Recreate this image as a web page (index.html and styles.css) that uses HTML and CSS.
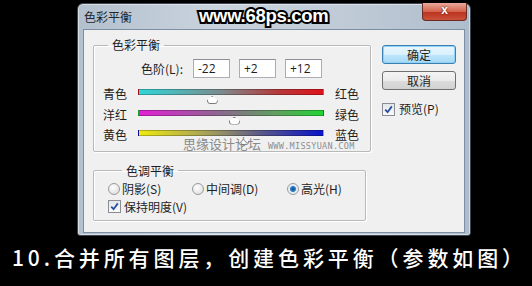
FILE: index.html
```html
<!DOCTYPE html>
<html lang="zh-CN">
<head>
  <meta charset="utf-8">
  <title>色彩平衡</title>
  <link rel="stylesheet" href="styles.css">
</head>
<body>

<div class="dialog">
  <div class="titlebar">
    <span class="title">色彩平衡</span>
    <span class="site">www.68ps.com</span>
    <span class="close">x</span>
  </div>

  <div class="client">
    <div class="main">
      <fieldset class="group balance">
        <legend>色彩平衡</legend>
        <div class="levels">
          <span class="levels-label">色阶(L):</span>
          <span class="field">-22</span>
          <span class="field">+2</span>
          <span class="field">+12</span>
        </div>

        <div class="slider">
          <span>青色</span>
          <div class="track cyan-red"><i class="thumb" style="left: 39%"></i></div>
          <span>红色</span>
        </div>
        <div class="slider">
          <span>洋红</span>
          <div class="track magenta-green"><i class="thumb" style="left: 51%"></i></div>
          <span>绿色</span>
        </div>
        <div class="slider">
          <span>黄色</span>
          <div class="track yellow-blue"><i class="thumb" style="left: 56%"></i></div>
          <span>蓝色</span>
        </div>

        <div class="watermark">思缘设计论坛 <small>WWW.MISSYUAN.COM</small></div>
      </fieldset>

      <fieldset class="group tone">
        <legend>色调平衡</legend>
        <div class="radios">
          <label class="opt shadows"><i class="radio"></i>阴影(S)</label>
          <label class="opt mids"><i class="radio"></i>中间调(D)</label>
          <label class="opt"><i class="radio on"></i>高光(H)</label>
        </div>
        <label class="opt keep"><i class="check"><svg viewBox="0 0 9 9" width="9" height="9"><path d="M1.2 4.6 L3.6 7.2 L7.8 1.4" fill="none" stroke="#2a4f9e" stroke-width="1.8"/></svg></i>保持明度(V)</label>
      </fieldset>
    </div>

    <div class="side">
      <span class="btn default">确定</span>
      <span class="btn">取消</span>
      <label class="opt preview"><i class="check"><svg viewBox="0 0 9 9" width="9" height="9"><path d="M1.2 4.6 L3.6 7.2 L7.8 1.4" fill="none" stroke="#2a4f9e" stroke-width="1.8"/></svg></i>预览(P)</label>
    </div>
  </div>
</div>

<p class="caption">10.合并所有图层，创建色彩平衡（参数如图）</p>

</body>
</html>
```

FILE: styles.css
```css
body {margin: 0; background: #000; font-family: "Noto Sans CJK SC", "Noto Sans", sans-serif; font-size: 12px; color: #1e1e1e; width: 532px; height: 286px; overflow: hidden;}

.dialog {margin: 3px 0 0 77px; width: 392px; height: 231px; border: 1px solid #3d4650; border-radius: 6px 6px 3px 3px; background: linear-gradient(to right, #b3c0cd, #c9d3de 35%, #bfcad6 70%, #aebdcc); box-shadow: inset 0 0 0 1px rgba(255,255,255,.45);}

.titlebar {display: flex; align-items: flex-start; height: 25px;}
.title {margin: 4px 0 0 6px; line-height: 17px; color: #20262c;}
.site {margin: 1px 0 0 67px; font-family: "Liberation Sans", Arial, sans-serif; font-weight: bold; font-size: 18.5px; line-height: 22px; color: #fff; -webkit-text-stroke: 4px #000; paint-order: stroke fill; letter-spacing: -0.3px;}
.close {margin: -1px 3px 0 auto; width: 43px; height: 17px; border: 1px solid #6b2a22; border-top: 0; border-radius: 0 0 4px 4px; background: linear-gradient(#e9a89c, #d4644e 50%, #bd3420 55%, #c9523a); color: #fff; font: bold 12px/15px "Liberation Sans", Arial, sans-serif; text-align: center; text-shadow: 0 0 2px #400;}

.client {display: flex; margin: 0 5px; height: 202px; border: 1px solid #7d8ea3; background: #f0f0f0;}
.main {width: 273px; margin-left: 9px;}

.group {margin: 0; padding: 0; border: 1px solid #b9b9b9; border-radius: 2px; box-shadow: 1px 1px 0 #fff, inset 1px 1px 0 #fff;}
.group legend {margin-left: 14px; padding: 0 4px; line-height: 16px;}
.balance {margin-top: 7px; position: relative; padding-bottom: 6px;}
.tone {margin-top: 11px; padding: 1px 0 5px 14px;}

.levels {display: flex; align-items: center; margin: 6px 0 0 47px; height: 19px;}
.levels-label {margin-right: 10px;}
.field {width: 31px; height: 17px; margin-right: 9px; padding-left: 4px; border: 1px solid #abadb3; border-top-color: #8c8f96; background: #fff; font-family: "Open Sans", "Noto Sans", sans-serif; line-height: 17px;}

.slider {display: flex; align-items: flex-start; height: 20.5px; padding-left: 9px;}
.levels + .slider {margin-top: 5px;}
.slider span {width: 35px; margin-top: 3px; line-height: 16px; white-space: nowrap;}
.track {position: relative; width: 184px; height: 4px; margin: 6px 11px 0 0; border: 1px solid rgba(0,0,0,.25);}
.cyan-red {background: linear-gradient(to right, #2fd6d8, #7d8a8c 45%, #b53a3c 75%, #e0121a);}
.magenta-green {background: linear-gradient(to right, #e21fd6, #8a6a8c 45%, #60a060 75%, #1ed632);}
.yellow-blue {background: linear-gradient(to right, #eeea10, #a09a60 40%, #505090 70%, #0c14c8);}
.thumb {position: absolute; top: 6px; width: 9px; height: 6px; margin-left: -4px; background: #fff; border: 1px solid #7a7a7a; border-radius: 0 0 3px 3px; clip-path: polygon(50% 0, 100% 55%, 100% 100%, 0 100%, 0 55%);}

.watermark {position: absolute; left: 89px; top: 83px; color: #8a8a8a; font-size: 13px; line-height: 16px; white-space: nowrap;}
.watermark small {margin-left: 4px; font-family: "DejaVu Sans Mono", monospace; font-size: 8.5px; letter-spacing: 0.3px; color: #8e8e8e;}

.opt {display: flex; align-items: center; height: 16px; line-height: 16px; white-space: nowrap;}
.radios {display: flex; margin-top: 1px;}
.shadows {width: 84px;}
.mids {width: 95px;}
.radio {width: 10px; height: 10px; margin-right: 2px; border: 1px solid #9a9a9a; border-radius: 50%; background: radial-gradient(circle at 40% 35%, #fff, #d8d8d8);}
.radio.on {background: radial-gradient(circle, #0e4b8a 0, #2f7fc4 2.5px, #dfe9f3 3.5px, #fff);}
.keep {margin-top: 2px;}
.check {display: flex; align-items: center; justify-content: center; width: 11px; height: 11px; margin-right: 3px; border: 1px solid #8a8e94; background: linear-gradient(#e3e6ea, #fafafa);}

.side {margin-left: 16px; width: 74px; display: flex; flex-direction: column;}
.btn {height: 17px; border: 1px solid #707070; border-radius: 3px; background: linear-gradient(#f4f4f4, #ebebeb 50%, #dcdcdc 51%, #d2d2d2); text-align: center; line-height: 17px;}
.btn.default {margin-top: 15px; border-color: #3c7fb1; background: linear-gradient(#eaf6fd, #d9f0fc 50%, #bee6fd 51%, #a7d9f5); box-shadow: inset 0 0 0 1px #8ed3f5;}
.btn + .btn {margin-top: 7px;}
.preview {margin-top: 11px;}
.preview .check {margin-right: 4px;}

.caption {margin: 10px 0 0 12px; color: #fff; font-size: 21px; font-weight: 500; line-height: 22px; letter-spacing: 3.9px; white-space: nowrap;}
```
